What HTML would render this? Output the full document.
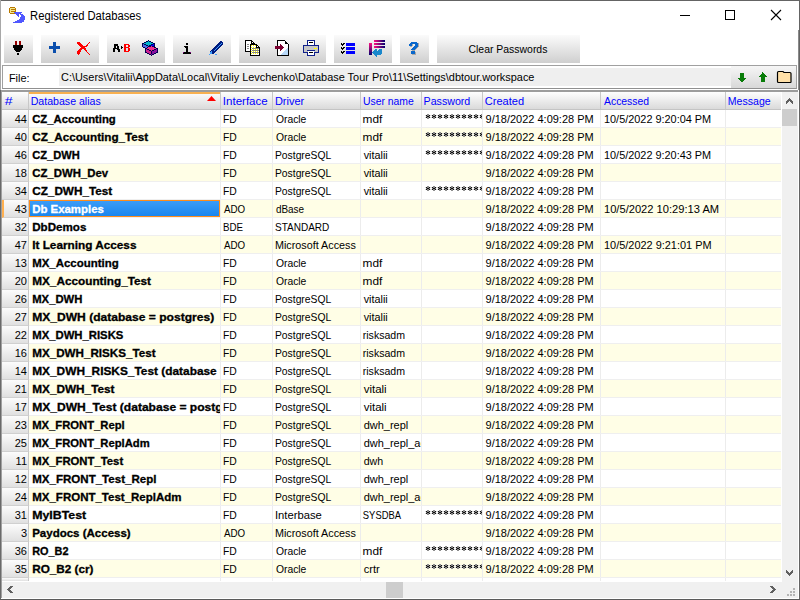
<!DOCTYPE html><html><head><meta charset="utf-8"><style>*{margin:0;padding:0;box-sizing:border-box}
html,body{width:800px;height:600px;overflow:hidden;background:#fff;font-family:"Liberation Sans",sans-serif;font-size:11px;color:#000;position:relative}
.abs{position:absolute}
#wl{position:absolute;left:0;top:0;width:1px;height:90px;background:#a8a8a8}
#wl2{position:absolute;left:0;top:90px;width:1px;height:510px;background:#6a6a6a}
#wl3{position:absolute;left:1px;top:92px;width:1px;height:506px;background:#a0a0a0}
#wt{position:absolute;left:0;top:0;width:800px;height:1px;background:#646464}
#wr{position:absolute;left:799px;top:0;width:1px;height:600px;background:#646464}
#wr2{position:absolute;left:798px;top:30px;width:1px;height:60px;background:#8a8a8a}
#wb{position:absolute;left:0;top:599px;width:800px;height:1px;background:#5a5a5a}

.tb{position:absolute;top:35px;height:28px;background:linear-gradient(#fbfbfb,#cfcfcf)}

#tbline{position:absolute;left:2px;top:65px;width:795px;height:1px;background:#a0a0a0}
#fp{position:absolute;left:2px;top:65px;width:795px;height:24px;border:1px solid #a0a0a0;border-bottom-color:#909090;background:#fff}

#fpedit{position:absolute;left:58px;top:67px;width:673px;height:20px;background:#efefef;border:1px solid #fff;border-right:none}

#fpbtn{position:absolute;left:731px;top:66px;width:65px;height:22px;background:linear-gradient(#f6f6f6,#d8d8d8)}

#line90{position:absolute;left:0px;top:90px;width:798px;height:2px;background:#9c9c9c}
#grid{position:absolute;left:0;top:0;width:800px;height:600px}
.hcell{position:absolute;background:linear-gradient(#fefefe,#dadada);border-right:1px solid #c8c8c8;color:#0000ff}
.hfix{position:absolute;background:linear-gradient(#fefefe,#dadada);border-right:1px solid #c8c8c8;color:#0000ff}
.ht{position:absolute;left:3px;top:3px;line-height:13px;white-space:nowrap}
.sortbar{position:absolute;left:0;top:0;width:100%;height:2px;background:#f8b050}
.rowbg{position:absolute;left:29px;width:752px;height:17px}
.fix{position:absolute;left:2px;width:27px;height:18px;background:linear-gradient(#fcfcfc,#e0e0e0);border-right:1px solid #c8c8c8;border-bottom:1px solid #d0d0d0}
.fix span{position:absolute;right:1px;top:3px;line-height:13px}
.fix.sel{border-left:2px solid #ffb050}
.c{position:absolute;height:17px;line-height:13px;padding:3px 0 0 3px;white-space:nowrap;overflow:hidden}
.b{font-weight:bold}
.selcell{position:absolute;left:29px;width:191px;height:17px;border:1px solid #ff8c1a;background:linear-gradient(#3c9cf6,#1a86ee);color:#fff;font-weight:bold}
.selcell span{position:absolute;left:2px;top:3px;line-height:13px;white-space:nowrap}
.vsep{position:absolute;top:110px;width:1px;height:471px;background:#ececec}
.hsep{position:absolute;left:29px;width:752px;height:1px;background:#efefef}
#vsb{position:absolute;left:782px;top:92px;width:16px;height:490px;background:#f0f0f0}
#vthumb{position:absolute;left:782px;top:109px;width:15px;height:17px;background:#cdcdcd}
#hsb{position:absolute;left:2px;top:582px;width:780px;height:16px;background:#f0f0f0}
#hthumb{position:absolute;left:386px;top:582px;width:17px;height:16px;background:#cdcdcd}
#corner{position:absolute;left:782px;top:582px;width:16px;height:16px;background:#f0f0f0}
.tc{position:absolute;white-space:nowrap}
.tc span{position:absolute;line-height:13px;white-space:nowrap;transform-origin:0 0}
.hc{color:#0000ff}
.ttl{font-size:12px}
.ttl span{line-height:16px}
.selt{color:#fff}
.pw span{left:3px;top:3px;font-size:13px;letter-spacing:1.75px}
#hline{position:absolute;left:2px;top:109px;width:779px;height:1px;background:#c4c4c4}
.b span{-webkit-text-stroke:0.3px currentColor}
</style></head><body>
<svg class="abs" style="left:0;top:0" width="800" height="100" shape-rendering="crispEdges"><rect x="10" y="7" width="5" height="1" fill="#b87800"/><rect x="9" y="8" width="1" height="1" fill="#b87800"/><rect x="10" y="8" width="5" height="1" fill="#f0e890"/><rect x="15" y="8" width="1" height="1" fill="#b87800"/><rect x="9" y="9" width="1" height="1" fill="#b87800"/><rect x="10" y="9" width="1" height="1" fill="#f0e890"/><rect x="11" y="9" width="5" height="1" fill="#b87800"/><rect x="9" y="10" width="1" height="1" fill="#b87800"/><rect x="10" y="10" width="5" height="1" fill="#f0e890"/><rect x="15" y="10" width="1" height="1" fill="#b87800"/><rect x="9" y="11" width="1" height="1" fill="#b87800"/><rect x="10" y="11" width="1" height="1" fill="#f0e890"/><rect x="11" y="11" width="5" height="1" fill="#b87800"/><rect x="9" y="12" width="1" height="1" fill="#b87800"/><rect x="10" y="12" width="5" height="1" fill="#f0e890"/><rect x="15" y="12" width="1" height="1" fill="#b87800"/><rect x="10" y="13" width="5" height="1" fill="#b87800"/><rect x="14" y="12" width="8" height="1" fill="#5058ff"/><rect x="15" y="13" width="6" height="1" fill="#5058ff"/><rect x="16" y="14" width="3" height="1" fill="#5058ff"/><rect x="20" y="14" width="3" height="1" fill="#5058ff"/><rect x="17" y="15" width="2" height="1" fill="#5058ff"/><rect x="21" y="15" width="3" height="1" fill="#5058ff"/><rect x="18" y="16" width="1" height="1" fill="#5058ff"/><rect x="21" y="16" width="4" height="1" fill="#5058ff"/><rect x="20" y="17" width="5" height="1" fill="#5058ff"/><rect x="20" y="18" width="5" height="1" fill="#5058ff"/><rect x="19" y="19" width="6" height="1" fill="#5058ff"/><rect x="17" y="20" width="7" height="1" fill="#5058ff"/><rect x="15" y="21" width="9" height="1" fill="#5058ff"/><rect x="13" y="22" width="9" height="1" fill="#5058ff"/></svg>

<svg class="abs" style="left:0;top:0" width="800" height="30">
 <rect x="680" y="15" width="10" height="1" fill="#000"/>
 <rect x="725.5" y="10.5" width="9" height="9" fill="none" stroke="#000" stroke-width="1"/>
 <path d="M771 10 L781 20 M781 10 L771 20" stroke="#000" stroke-width="1.1"/>
</svg>
<div class="tb" style="left:4px;width:29px"></div>
<div class="tb" style="left:41px;width:58px"></div>
<div class="tb" style="left:107px;width:58px"></div>
<div class="tb" style="left:173px;width:58px"></div>
<div class="tb" style="left:239px;width:87px"></div>
<div class="tb" style="left:334px;width:58px"></div>
<div class="tb" style="left:400px;width:29px"></div>
<div class="tb" style="left:437px;width:143px"></div>
<svg class="abs" style="left:0;top:0" width="800" height="64" shape-rendering="crispEdges">
 <!-- plus -->
 <rect x="53" y="42" width="3" height="11" fill="#0b4fad"/><rect x="49" y="46" width="11" height="3" fill="#0b4fad"/>
</svg>
<svg class="abs" style="left:0;top:0" width="800" height="100" shape-rendering="crispEdges"><rect x="77" y="42" width="3" height="1" fill="#ff0000"/><rect x="89" y="42" width="1" height="1" fill="#ff0000"/><rect x="77" y="43" width="4" height="1" fill="#ff0000"/><rect x="88" y="43" width="1" height="1" fill="#ff0000"/><rect x="78" y="44" width="4" height="1" fill="#ff0000"/><rect x="87" y="44" width="1" height="1" fill="#ff0000"/><rect x="79" y="45" width="4" height="1" fill="#ff0000"/><rect x="86" y="45" width="2" height="1" fill="#ff0000"/><rect x="80" y="46" width="7" height="1" fill="#ff0000"/><rect x="81" y="47" width="4" height="1" fill="#ff0000"/><rect x="80" y="48" width="6" height="1" fill="#ff0000"/><rect x="79" y="49" width="3" height="1" fill="#ff0000"/><rect x="84" y="49" width="2" height="1" fill="#ff0000"/><rect x="78" y="50" width="3" height="1" fill="#ff0000"/><rect x="85" y="50" width="2" height="1" fill="#ff0000"/><rect x="77" y="51" width="4" height="1" fill="#ff0000"/><rect x="86" y="51" width="1" height="1" fill="#ff0000"/><rect x="77" y="52" width="3" height="1" fill="#ff0000"/><rect x="87" y="52" width="1" height="1" fill="#ff0000"/><rect x="77" y="53" width="3" height="1" fill="#ff0000"/><rect x="88" y="53" width="1" height="1" fill="#ff0000"/><rect x="78" y="54" width="1" height="1" fill="#ff0000"/><rect x="89" y="54" width="1" height="1" fill="#ff0000"/></svg><svg class="abs" style="left:0;top:0" width="800" height="64" shape-rendering="crispEdges">
</svg>
<svg class="abs" style="left:0;top:0" width="800" height="100" shape-rendering="crispEdges"><rect x="220" y="41" width="2" height="1" fill="#001c80"/><rect x="219" y="42" width="4" height="1" fill="#001c80"/><rect x="218" y="43" width="3" height="1" fill="#001c80"/><rect x="221" y="43" width="1" height="1" fill="#40a0ff"/><rect x="222" y="43" width="1" height="1" fill="#001c80"/><rect x="217" y="44" width="3" height="1" fill="#001c80"/><rect x="220" y="44" width="1" height="1" fill="#40a0ff"/><rect x="221" y="44" width="2" height="1" fill="#001c80"/><rect x="216" y="45" width="3" height="1" fill="#001c80"/><rect x="219" y="45" width="1" height="1" fill="#40a0ff"/><rect x="220" y="45" width="2" height="1" fill="#001c80"/><rect x="215" y="46" width="3" height="1" fill="#001c80"/><rect x="218" y="46" width="1" height="1" fill="#40a0ff"/><rect x="219" y="46" width="2" height="1" fill="#001c80"/><rect x="214" y="47" width="3" height="1" fill="#001c80"/><rect x="217" y="47" width="1" height="1" fill="#40a0ff"/><rect x="218" y="47" width="2" height="1" fill="#001c80"/><rect x="213" y="48" width="3" height="1" fill="#001c80"/><rect x="216" y="48" width="1" height="1" fill="#40a0ff"/><rect x="217" y="48" width="2" height="1" fill="#001c80"/><rect x="212" y="49" width="3" height="1" fill="#001c80"/><rect x="215" y="49" width="1" height="1" fill="#40a0ff"/><rect x="216" y="49" width="2" height="1" fill="#001c80"/><rect x="211" y="50" width="3" height="1" fill="#001c80"/><rect x="214" y="50" width="1" height="1" fill="#40a0ff"/><rect x="215" y="50" width="2" height="1" fill="#001c80"/><rect x="210" y="51" width="1" height="1" fill="#001c80"/><rect x="211" y="51" width="1" height="1" fill="#40a0ff"/><rect x="212" y="51" width="4" height="1" fill="#001c80"/><rect x="210" y="52" width="2" height="1" fill="#40a0ff"/><rect x="212" y="52" width="3" height="1" fill="#001c80"/><rect x="210" y="53" width="2" height="1" fill="#40a0ff"/><rect x="212" y="53" width="2" height="1" fill="#001c80"/><rect x="209" y="54" width="1" height="1" fill="#40a0ff"/><rect x="215" y="54" width="2" height="1" fill="#40a0ff"/></svg><svg class="abs" style="left:0;top:0" width="800" height="64" shape-rendering="crispEdges">
 <!-- import -->
 <path d="M277 40H285V41H286V42H287V43H288V44H289V56H277Z" fill="#000"/>
 <path d="M278 41H285V44H288V55H278Z" fill="#fff"/>
 <path d="M288 47 L288 55 L280 55Z" fill="#b8d8f8"/>
 <path d="M275 46H280V44H281V45H282V46H283V47H284V48H283V49H282V50H281V51H280V49H275Z" fill="#7a0030"/>
 <!-- printer -->
 <path d="M307 40H315V45H319V53H315V56H307V53H303V45H307Z" fill="#10208a"/>
 <rect x="308" y="41" width="6" height="4" fill="#fff"/>
 <rect x="304" y="46" width="14" height="6" fill="#c8c8c8"/>
 <rect x="314" y="48" width="3" height="1" fill="#ffff00"/>
 <rect x="308" y="51" width="6" height="4" fill="#fff"/>
 <rect x="307" y="50" width="8" height="1" fill="#10208a"/>
 <rect x="309" y="42" width="4" height="1" fill="#000"/><rect x="309" y="52" width="4" height="1" fill="#000"/>
 <!-- check list -->
 <path d="M341 43H342V44H343V43H345V44H344V45H343V46H342V45H341Z" fill="#000"/>
 <path d="M341 47H342V48H343V47H345V48H344V49H343V50H342V49H341Z" fill="#000"/>
 <path d="M341 51H342V52H343V51H345V52H344V53H343V54H342V53H341Z" fill="#000"/>
 <rect x="346" y="43" width="9" height="3" fill="#0000ff"/><rect x="346" y="47" width="9" height="3" fill="#0000ff"/><rect x="346" y="51" width="9" height="3" fill="#0000ff"/>
</svg>
<svg class="abs" style="left:0;top:0" width="800" height="64">
 <defs><linearGradient id="pg" x1="0" y1="0" x2="1" y2="0"><stop offset="0" stop-color="#ff1080"/><stop offset="1" stop-color="#000070"/></linearGradient>
 <linearGradient id="pgv" x1="0" y1="0" x2="0" y2="1"><stop offset="0" stop-color="#ff1080"/><stop offset="1" stop-color="#000070"/></linearGradient></defs>
 <rect x="369" y="43" width="3" height="12" fill="url(#pgv)"/>
 <rect x="374" y="40" width="11" height="2" fill="url(#pg)"/>
 <rect x="374" y="43" width="11" height="2" fill="url(#pg)"/>
 <rect x="374" y="46" width="11" height="2" fill="url(#pg)"/>
 <rect x="411" y="51" width="3.5" height="3" fill="#0a66cc"/>
</svg>
<svg class="abs" style="left:0;top:0" width="800" height="100" shape-rendering="crispEdges"><rect x="114" y="44" width="4" height="1" fill="#000000"/><rect x="124" y="44" width="5" height="1" fill="#ff0000"/><rect x="114" y="45" width="4" height="1" fill="#000000"/><rect x="124" y="45" width="2" height="1" fill="#ff0000"/><rect x="128" y="45" width="2" height="1" fill="#ff0000"/><rect x="114" y="46" width="2" height="1" fill="#000000"/><rect x="117" y="46" width="2" height="1" fill="#000000"/><rect x="121" y="46" width="1" height="1" fill="#000000"/><rect x="124" y="46" width="2" height="1" fill="#ff0000"/><rect x="128" y="46" width="2" height="1" fill="#ff0000"/><rect x="114" y="47" width="2" height="1" fill="#000000"/><rect x="117" y="47" width="2" height="1" fill="#000000"/><rect x="121" y="47" width="2" height="1" fill="#000000"/><rect x="124" y="47" width="5" height="1" fill="#ff0000"/><rect x="113" y="48" width="6" height="1" fill="#000000"/><rect x="121" y="48" width="1" height="1" fill="#000000"/><rect x="124" y="48" width="2" height="1" fill="#ff0000"/><rect x="128" y="48" width="2" height="1" fill="#ff0000"/><rect x="113" y="49" width="2" height="1" fill="#000000"/><rect x="117" y="49" width="3" height="1" fill="#000000"/><rect x="124" y="49" width="2" height="1" fill="#ff0000"/><rect x="128" y="49" width="2" height="1" fill="#ff0000"/><rect x="113" y="50" width="2" height="1" fill="#000000"/><rect x="118" y="50" width="2" height="1" fill="#000000"/><rect x="124" y="50" width="2" height="1" fill="#ff0000"/><rect x="128" y="50" width="2" height="1" fill="#ff0000"/><rect x="113" y="51" width="2" height="1" fill="#000000"/><rect x="118" y="51" width="2" height="1" fill="#000000"/><rect x="124" y="51" width="5" height="1" fill="#ff0000"/></svg><svg class="abs" style="left:0;top:0" width="800" height="100" shape-rendering="crispEdges"><rect x="245" y="40" width="7" height="1" fill="#000000"/><rect x="245" y="41" width="1" height="1" fill="#000000"/><rect x="246" y="41" width="5" height="1" fill="#ffffff"/><rect x="251" y="41" width="2" height="1" fill="#000000"/><rect x="245" y="42" width="1" height="1" fill="#000000"/><rect x="246" y="42" width="5" height="1" fill="#ffffff"/><rect x="251" y="42" width="1" height="1" fill="#000000"/><rect x="252" y="42" width="1" height="1" fill="#ffffff"/><rect x="253" y="42" width="1" height="1" fill="#000000"/><rect x="245" y="43" width="1" height="1" fill="#000000"/><rect x="246" y="43" width="5" height="1" fill="#ffffff"/><rect x="251" y="43" width="4" height="1" fill="#000000"/><rect x="245" y="44" width="1" height="1" fill="#000000"/><rect x="246" y="44" width="1" height="1" fill="#ffffff"/><rect x="247" y="44" width="2" height="1" fill="#8a8a8a"/><rect x="249" y="44" width="1" height="1" fill="#ffffff"/><rect x="250" y="44" width="7" height="1" fill="#000000"/><rect x="245" y="45" width="1" height="1" fill="#000000"/><rect x="246" y="45" width="4" height="1" fill="#ffffff"/><rect x="250" y="45" width="1" height="1" fill="#000000"/><rect x="251" y="45" width="1" height="1" fill="#f0f000"/><rect x="252" y="45" width="1" height="1" fill="#ffffff"/><rect x="253" y="45" width="1" height="1" fill="#f0f000"/><rect x="254" y="45" width="1" height="1" fill="#ffffff"/><rect x="255" y="45" width="1" height="1" fill="#f0f000"/><rect x="256" y="45" width="2" height="1" fill="#000000"/><rect x="245" y="46" width="1" height="1" fill="#000000"/><rect x="246" y="46" width="1" height="1" fill="#ffffff"/><rect x="247" y="46" width="2" height="1" fill="#8a8a8a"/><rect x="249" y="46" width="1" height="1" fill="#ffffff"/><rect x="250" y="46" width="1" height="1" fill="#000000"/><rect x="251" y="46" width="5" height="1" fill="#ffffff"/><rect x="256" y="46" width="1" height="1" fill="#000000"/><rect x="257" y="46" width="1" height="1" fill="#ffffff"/><rect x="258" y="46" width="1" height="1" fill="#000000"/><rect x="245" y="47" width="1" height="1" fill="#000000"/><rect x="246" y="47" width="4" height="1" fill="#ffffff"/><rect x="250" y="47" width="1" height="1" fill="#000000"/><rect x="251" y="47" width="1" height="1" fill="#f0f000"/><rect x="252" y="47" width="1" height="1" fill="#ffffff"/><rect x="253" y="47" width="1" height="1" fill="#f0f000"/><rect x="254" y="47" width="1" height="1" fill="#ffffff"/><rect x="255" y="47" width="1" height="1" fill="#f0f000"/><rect x="256" y="47" width="4" height="1" fill="#000000"/><rect x="245" y="48" width="1" height="1" fill="#000000"/><rect x="246" y="48" width="1" height="1" fill="#ffffff"/><rect x="247" y="48" width="2" height="1" fill="#8a8a8a"/><rect x="249" y="48" width="1" height="1" fill="#ffffff"/><rect x="250" y="48" width="1" height="1" fill="#000000"/><rect x="251" y="48" width="1" height="1" fill="#ffffff"/><rect x="252" y="48" width="7" height="1" fill="#8a8a8a"/><rect x="259" y="48" width="1" height="1" fill="#000000"/><rect x="245" y="49" width="1" height="1" fill="#000000"/><rect x="246" y="49" width="4" height="1" fill="#ffffff"/><rect x="250" y="49" width="1" height="1" fill="#000000"/><rect x="251" y="49" width="1" height="1" fill="#f0f000"/><rect x="252" y="49" width="1" height="1" fill="#ffffff"/><rect x="253" y="49" width="1" height="1" fill="#f0f000"/><rect x="254" y="49" width="1" height="1" fill="#ffffff"/><rect x="255" y="49" width="1" height="1" fill="#f0f000"/><rect x="256" y="49" width="1" height="1" fill="#ffffff"/><rect x="257" y="49" width="1" height="1" fill="#f0f000"/><rect x="258" y="49" width="1" height="1" fill="#ffffff"/><rect x="259" y="49" width="1" height="1" fill="#000000"/><rect x="245" y="50" width="1" height="1" fill="#000000"/><rect x="246" y="50" width="4" height="1" fill="#ffffff"/><rect x="250" y="50" width="1" height="1" fill="#000000"/><rect x="251" y="50" width="1" height="1" fill="#ffffff"/><rect x="252" y="50" width="7" height="1" fill="#8a8a8a"/><rect x="259" y="50" width="1" height="1" fill="#000000"/><rect x="245" y="51" width="6" height="1" fill="#000000"/><rect x="251" y="51" width="1" height="1" fill="#f0f000"/><rect x="252" y="51" width="1" height="1" fill="#ffffff"/><rect x="253" y="51" width="1" height="1" fill="#f0f000"/><rect x="254" y="51" width="1" height="1" fill="#ffffff"/><rect x="255" y="51" width="1" height="1" fill="#f0f000"/><rect x="256" y="51" width="1" height="1" fill="#ffffff"/><rect x="257" y="51" width="1" height="1" fill="#f0f000"/><rect x="258" y="51" width="1" height="1" fill="#ffffff"/><rect x="259" y="51" width="1" height="1" fill="#000000"/><rect x="250" y="52" width="1" height="1" fill="#000000"/><rect x="251" y="52" width="1" height="1" fill="#ffffff"/><rect x="252" y="52" width="7" height="1" fill="#8a8a8a"/><rect x="259" y="52" width="1" height="1" fill="#000000"/><rect x="250" y="53" width="1" height="1" fill="#000000"/><rect x="251" y="53" width="1" height="1" fill="#f0f000"/><rect x="252" y="53" width="1" height="1" fill="#ffffff"/><rect x="253" y="53" width="1" height="1" fill="#f0f000"/><rect x="254" y="53" width="1" height="1" fill="#ffffff"/><rect x="255" y="53" width="1" height="1" fill="#f0f000"/><rect x="256" y="53" width="1" height="1" fill="#ffffff"/><rect x="257" y="53" width="1" height="1" fill="#f0f000"/><rect x="258" y="53" width="1" height="1" fill="#ffffff"/><rect x="259" y="53" width="1" height="1" fill="#000000"/><rect x="250" y="54" width="1" height="1" fill="#000000"/><rect x="251" y="54" width="8" height="1" fill="#ffffff"/><rect x="259" y="54" width="1" height="1" fill="#000000"/><rect x="250" y="55" width="10" height="1" fill="#000000"/></svg><svg class="abs" style="left:0;top:0" width="800" height="100" shape-rendering="crispEdges"><rect x="375" y="49" width="2" height="1" fill="#1a88cc"/><rect x="379" y="49" width="3" height="1" fill="#1a88cc"/><rect x="374" y="50" width="3" height="1" fill="#1a88cc"/><rect x="378" y="50" width="4" height="1" fill="#1a88cc"/><rect x="373" y="51" width="9" height="1" fill="#1a88cc"/><rect x="372" y="52" width="10" height="1" fill="#1a88cc"/><rect x="373" y="53" width="9" height="1" fill="#1a88cc"/><rect x="374" y="54" width="7" height="1" fill="#1a88cc"/><rect x="375" y="55" width="2" height="1" fill="#1a88cc"/><rect x="376" y="56" width="1" height="1" fill="#1a88cc"/></svg><svg class="abs" style="left:0;top:0" width="800" height="100" shape-rendering="crispEdges"><rect x="148" y="40" width="1" height="1" fill="#000050"/><rect x="146" y="41" width="2" height="1" fill="#000050"/><rect x="148" y="41" width="1" height="1" fill="#00b4cc"/><rect x="149" y="41" width="2" height="1" fill="#000050"/><rect x="144" y="42" width="2" height="1" fill="#000050"/><rect x="146" y="42" width="5" height="1" fill="#00b4cc"/><rect x="151" y="42" width="2" height="1" fill="#000050"/><rect x="142" y="43" width="2" height="1" fill="#000050"/><rect x="144" y="43" width="9" height="1" fill="#00b4cc"/><rect x="153" y="43" width="2" height="1" fill="#000050"/><rect x="142" y="44" width="1" height="1" fill="#000050"/><rect x="143" y="44" width="1" height="1" fill="#4a6ae6"/><rect x="144" y="44" width="2" height="1" fill="#000050"/><rect x="146" y="44" width="5" height="1" fill="#00b4cc"/><rect x="151" y="44" width="2" height="1" fill="#000050"/><rect x="153" y="44" width="1" height="1" fill="#0000ff"/><rect x="154" y="44" width="1" height="1" fill="#000050"/><rect x="142" y="45" width="1" height="1" fill="#000050"/><rect x="143" y="45" width="3" height="1" fill="#4a6ae6"/><rect x="146" y="45" width="2" height="1" fill="#000050"/><rect x="148" y="45" width="1" height="1" fill="#00b4cc"/><rect x="149" y="45" width="2" height="1" fill="#000050"/><rect x="151" y="45" width="3" height="1" fill="#0000ff"/><rect x="154" y="45" width="1" height="1" fill="#000050"/><rect x="142" y="46" width="1" height="1" fill="#000050"/><rect x="143" y="46" width="5" height="1" fill="#4a6ae6"/><rect x="148" y="46" width="3" height="1" fill="#000050"/><rect x="151" y="46" width="1" height="1" fill="#f02c8c"/><rect x="152" y="46" width="3" height="1" fill="#000050"/><rect x="143" y="47" width="2" height="1" fill="#000050"/><rect x="145" y="47" width="2" height="1" fill="#4a6ae6"/><rect x="147" y="47" width="1" height="1" fill="#000050"/><rect x="148" y="47" width="6" height="1" fill="#f02c8c"/><rect x="154" y="47" width="2" height="1" fill="#000050"/><rect x="145" y="48" width="2" height="1" fill="#000050"/><rect x="147" y="48" width="9" height="1" fill="#f02c8c"/><rect x="156" y="48" width="2" height="1" fill="#000050"/><rect x="145" y="49" width="1" height="1" fill="#000050"/><rect x="146" y="49" width="1" height="1" fill="#cc2090"/><rect x="147" y="49" width="2" height="1" fill="#000050"/><rect x="149" y="49" width="5" height="1" fill="#f02c8c"/><rect x="154" y="49" width="2" height="1" fill="#000050"/><rect x="156" y="49" width="1" height="1" fill="#8a10a0"/><rect x="157" y="49" width="1" height="1" fill="#000050"/><rect x="145" y="50" width="1" height="1" fill="#000050"/><rect x="146" y="50" width="3" height="1" fill="#cc2090"/><rect x="149" y="50" width="2" height="1" fill="#000050"/><rect x="151" y="50" width="1" height="1" fill="#f02c8c"/><rect x="152" y="50" width="2" height="1" fill="#000050"/><rect x="154" y="50" width="3" height="1" fill="#8a10a0"/><rect x="157" y="50" width="1" height="1" fill="#000050"/><rect x="145" y="51" width="1" height="1" fill="#000050"/><rect x="146" y="51" width="5" height="1" fill="#cc2090"/><rect x="151" y="51" width="1" height="1" fill="#000050"/><rect x="152" y="51" width="5" height="1" fill="#8a10a0"/><rect x="157" y="51" width="1" height="1" fill="#000050"/><rect x="145" y="52" width="2" height="1" fill="#000050"/><rect x="147" y="52" width="4" height="1" fill="#cc2090"/><rect x="151" y="52" width="1" height="1" fill="#000050"/><rect x="152" y="52" width="4" height="1" fill="#8a10a0"/><rect x="156" y="52" width="2" height="1" fill="#000050"/><rect x="147" y="53" width="2" height="1" fill="#000050"/><rect x="149" y="53" width="2" height="1" fill="#cc2090"/><rect x="151" y="53" width="1" height="1" fill="#000050"/><rect x="152" y="53" width="2" height="1" fill="#8a10a0"/><rect x="154" y="53" width="2" height="1" fill="#000050"/><rect x="149" y="54" width="2" height="1" fill="#000050"/><rect x="151" y="54" width="1" height="1" fill="#8a10a0"/><rect x="152" y="54" width="2" height="1" fill="#000050"/><rect x="151" y="55" width="1" height="1" fill="#000050"/></svg><svg class="abs" style="left:0;top:0" width="800" height="100" shape-rendering="crispEdges"><rect x="15" y="41" width="2" height="1" fill="#980000"/><rect x="19" y="41" width="2" height="1" fill="#980000"/><rect x="15" y="42" width="2" height="1" fill="#980000"/><rect x="19" y="42" width="2" height="1" fill="#980000"/><rect x="15" y="43" width="2" height="1" fill="#980000"/><rect x="19" y="43" width="2" height="1" fill="#980000"/><rect x="15" y="44" width="2" height="1" fill="#980000"/><rect x="19" y="44" width="2" height="1" fill="#980000"/><rect x="13" y="45" width="10" height="1" fill="#000000"/><rect x="13" y="46" width="10" height="1" fill="#000000"/><rect x="13" y="47" width="10" height="1" fill="#000000"/><rect x="14" y="48" width="8" height="1" fill="#000000"/><rect x="14" y="49" width="8" height="1" fill="#000000"/><rect x="15" y="50" width="6" height="1" fill="#000000"/><rect x="16" y="51" width="4" height="1" fill="#000000"/><rect x="17" y="53" width="2" height="1" fill="#000000"/><rect x="17" y="54" width="2" height="1" fill="#000000"/></svg><svg class="abs" style="left:0;top:0" width="800" height="100" shape-rendering="crispEdges"><rect x="186" y="43" width="2" height="1" fill="#000000"/><rect x="186" y="44" width="2" height="1" fill="#000000"/><rect x="184" y="46" width="4" height="1" fill="#000000"/><rect x="185" y="47" width="3" height="1" fill="#000000"/><rect x="186" y="48" width="2" height="1" fill="#000000"/><rect x="186" y="49" width="2" height="1" fill="#000000"/><rect x="186" y="50" width="2" height="1" fill="#000000"/><rect x="186" y="51" width="2" height="1" fill="#000000"/><rect x="183" y="52" width="1" height="1" fill="#800080"/><rect x="184" y="52" width="6" height="1" fill="#000000"/><rect x="190" y="52" width="1" height="1" fill="#800080"/><rect x="183" y="53" width="8" height="1" fill="#000000"/></svg><svg class="abs" style="left:0;top:0" width="800" height="100" shape-rendering="crispEdges"><rect x="411" y="42" width="6" height="1" fill="#0a68cc"/><rect x="410" y="43" width="8" height="1" fill="#0a68cc"/><rect x="418" y="43" width="1" height="1" fill="#a8a8a8"/><rect x="409" y="44" width="3" height="1" fill="#0a68cc"/><rect x="412" y="44" width="1" height="1" fill="#a8a8a8"/><rect x="415" y="44" width="3" height="1" fill="#0a68cc"/><rect x="418" y="44" width="1" height="1" fill="#a8a8a8"/><rect x="409" y="45" width="3" height="1" fill="#0a68cc"/><rect x="412" y="45" width="1" height="1" fill="#a8a8a8"/><rect x="415" y="45" width="3" height="1" fill="#0a68cc"/><rect x="418" y="45" width="1" height="1" fill="#a8a8a8"/><rect x="410" y="46" width="2" height="1" fill="#a8a8a8"/><rect x="414" y="46" width="4" height="1" fill="#0a68cc"/><rect x="418" y="46" width="1" height="1" fill="#a8a8a8"/><rect x="413" y="47" width="4" height="1" fill="#0a68cc"/><rect x="417" y="47" width="1" height="1" fill="#a8a8a8"/><rect x="412" y="48" width="4" height="1" fill="#0a68cc"/><rect x="416" y="48" width="1" height="1" fill="#a8a8a8"/><rect x="411" y="49" width="4" height="1" fill="#0a68cc"/><rect x="415" y="49" width="1" height="1" fill="#a8a8a8"/><rect x="412" y="50" width="3" height="1" fill="#a8a8a8"/><rect x="411" y="51" width="4" height="1" fill="#0a68cc"/><rect x="411" y="52" width="4" height="1" fill="#0a68cc"/><rect x="415" y="52" width="1" height="1" fill="#a8a8a8"/><rect x="411" y="53" width="4" height="1" fill="#0a68cc"/><rect x="415" y="53" width="1" height="1" fill="#a8a8a8"/><rect x="412" y="54" width="4" height="1" fill="#a8a8a8"/></svg><div id="fp"></div>

<div id="fpedit"></div>

<div id="fpbtn"></div>
<svg class="abs" style="left:0;top:0" width="800" height="90" shape-rendering="crispEdges">
 <path d="M740 73H744V78H746V79H745V80H744V81H743V82H741V81H740V80H739V79H738V78H740Z" fill="#087c08"/>
 <path d="M762 72H763V73H764V74H765V75H766V76H767V77H765V82H761V77H759V76H760V75H761V74H762Z" fill="#087c08"/>
</svg>
<svg class="abs" style="left:0;top:0" width="800" height="90">
 <path d="M777.5 72.5 Q777.5 71.5 778.5 71.5 L783 71.5 L784 72.5 L790 72.5 Q791 72.5 791 73.5 L791 82 Q791 82.5 790.5 82.5 L778.5 82.5 Q777.5 82.5 777.5 81.5Z" fill="#ffe0a8" stroke="#000" stroke-width="1.2"/>
</svg>
<div id="line90"></div>
<div class="tc ttl" style="left:28px;top:5px;width:140px;height:18px;overflow:hidden;"><span style="left:3px;top:3px;transform:translateX(-0.94px) scaleX(0.9359);">Registered Databases</span></div><div class="tc " style="left:437px;top:35px;width:143px;height:28px;overflow:hidden;"><span style="left:31px;top:8px;transform:translateX(0.50px) scaleX(0.9488);">Clear Passwords</span></div><div class="tc " style="left:4px;top:68px;width:50px;height:18px;overflow:hidden;"><span style="left:6px;top:4px;transform:translateX(-1.09px) scaleX(0.9921);">File:</span></div><div class="tc " style="left:58px;top:68px;width:673px;height:18px;overflow:hidden;"><span style="left:3px;top:3px;transform:translateX(0.00px) scaleX(0.9931);">C:\Users\Vitalii\AppData\Local\Vitaliy Levchenko\Database Tour Pro\11\Settings\dbtour.workspace</span></div><svg width="0" height="0" style="position:absolute"><defs><pattern id="ast" x="3" y="4" width="6" height="5" patternUnits="userSpaceOnUse"><rect x="2" y="0" width="2" height="1" fill="#8c8c8c"/><rect x="0" y="1" width="1" height="1" fill="#d8d8d8"/><rect x="1" y="1" width="1" height="1" fill="#101010"/><rect x="2" y="1" width="2" height="1" fill="#8c8c8c"/><rect x="4" y="1" width="1" height="1" fill="#101010"/><rect x="5" y="1" width="1" height="1" fill="#d8d8d8"/><rect x="1" y="2" width="1" height="1" fill="#8c8c8c"/><rect x="2" y="2" width="2" height="1" fill="#101010"/><rect x="4" y="2" width="1" height="1" fill="#8c8c8c"/><rect x="0" y="3" width="1" height="1" fill="#d8d8d8"/><rect x="1" y="3" width="1" height="1" fill="#101010"/><rect x="2" y="3" width="2" height="1" fill="#8c8c8c"/><rect x="4" y="3" width="1" height="1" fill="#101010"/><rect x="5" y="3" width="1" height="1" fill="#d8d8d8"/><rect x="2" y="4" width="2" height="1" fill="#8c8c8c"/></pattern></defs></svg><div id="grid"><div class="hfix" style="left:2px;top:92px;width:27px;height:17px"></div><div class="tc hc" style="left:2px;top:92px;width:26px;height:17px;overflow:hidden;"><span style="left:4px;top:3px;transform:translateX(-1.28px) scaleX(1.2800);">#</span></div><div class="hcell" style="left:29px;top:92px;width:192px;height:17px;"><div class="sortbar"></div><svg width="10" height="6" style="position:absolute;left:178px;top:4px"><path d="M4.5 0 L9 5 L0 5Z" fill="#f00"/></svg></div><div class="tc hc" style="left:29px;top:92px;width:191px;height:17px;overflow:hidden;"><span style="left:3px;top:3px;transform:translateX(-1.36px) scaleX(0.9639);">Database alias</span></div><div class="hcell" style="left:221px;top:92px;width:52px;height:17px;"></div><div class="tc hc" style="left:221px;top:92px;width:51px;height:17px;overflow:hidden;"><span style="left:3px;top:3px;transform:translateX(-1.15px) scaleX(1.0476);">Interface</span></div><div class="hcell" style="left:273px;top:92px;width:88px;height:17px;"></div><div class="tc hc" style="left:273px;top:92px;width:87px;height:17px;overflow:hidden;"><span style="left:3px;top:3px;transform:translateX(-1.10px) scaleX(1.0000);">Driver</span></div><div class="hcell" style="left:361px;top:92px;width:61px;height:17px;"></div><div class="tc hc" style="left:361px;top:92px;width:60px;height:17px;overflow:hidden;"><span style="left:3px;top:3px;transform:translateX(-1.05px) scaleX(0.9453);">User name</span></div><div class="hcell" style="left:422px;top:92px;width:61px;height:17px;"></div><div class="tc hc" style="left:422px;top:92px;width:60px;height:17px;overflow:hidden;"><span style="left:3px;top:3px;transform:translateX(-1.47px) scaleX(0.9681);">Password</span></div><div class="hcell" style="left:483px;top:92px;width:118px;height:17px;"></div><div class="tc hc" style="left:483px;top:92px;width:117px;height:17px;overflow:hidden;"><span style="left:3px;top:3px;transform:translateX(-1.21px) scaleX(1.0053);">Created</span></div><div class="hcell" style="left:601px;top:92px;width:125px;height:17px;"></div><div class="tc hc" style="left:601px;top:92px;width:124px;height:17px;overflow:hidden;"><span style="left:3px;top:3px;transform:translateX(0.00px) scaleX(0.9447);">Accessed</span></div><div class="hcell" style="left:726px;top:92px;width:55px;height:17px;border-right:none"></div><div class="tc hc" style="left:726px;top:92px;width:55px;height:17px;overflow:hidden;"><span style="left:3px;top:3px;transform:translateX(-1.16px) scaleX(0.9581);">Message</span></div><div class="rowbg" style="top:110px;background:#ffffff"></div><div class="fix" style="top:110px"><span>44</span></div><div class="tc b" style="left:29px;top:110px;width:191px;height:17px;overflow:hidden;"><span style="left:3px;top:3px;transform:translateX(0.20px) scaleX(1.0284);">CZ_Accounting</span></div><div class="tc " style="left:221px;top:110px;width:51px;height:17px;overflow:hidden;"><span style="left:3px;top:3px;transform:translateX(-1.04px) scaleX(0.9385);">FD</span></div><div class="tc " style="left:273px;top:110px;width:87px;height:17px;overflow:hidden;"><span style="left:3px;top:3px;transform:translateX(-0.10px) scaleX(0.9406);">Oracle</span></div><div class="tc " style="left:361px;top:110px;width:60px;height:17px;overflow:hidden;"><span style="left:3px;top:3px;transform:translateX(-1.38px) scaleX(1.0765);">mdf</span></div><svg class="abs" style="left:422px;top:110px" width="60" height="17"><rect x="3" y="4" width="57" height="5" fill="url(#ast)"/></svg><div class="tc " style="left:483px;top:110px;width:117px;height:17px;overflow:hidden;"><span style="left:3px;top:3px;transform:translateX(-0.40px) scaleX(0.9981);">9/18/2022 4:09:28 PM</span></div><div class="tc " style="left:601px;top:110px;width:124px;height:17px;overflow:hidden;"><span style="left:3px;top:3px;transform:translateX(0.01px) scaleX(0.9897);">10/5/2022 9:20:04 PM</span></div><div class="rowbg" style="top:128px;background:#fffee6"></div><div class="fix" style="top:128px"><span>40</span></div><div class="tc b" style="left:29px;top:128px;width:191px;height:17px;overflow:hidden;"><span style="left:3px;top:3px;transform:translateX(0.20px) scaleX(1.0624);">CZ_Accounting_Test</span></div><div class="tc " style="left:221px;top:128px;width:51px;height:17px;overflow:hidden;"><span style="left:3px;top:3px;transform:translateX(-1.04px) scaleX(0.9385);">FD</span></div><div class="tc " style="left:273px;top:128px;width:87px;height:17px;overflow:hidden;"><span style="left:3px;top:3px;transform:translateX(-0.10px) scaleX(0.9406);">Oracle</span></div><div class="tc " style="left:361px;top:128px;width:60px;height:17px;overflow:hidden;"><span style="left:3px;top:3px;transform:translateX(-1.38px) scaleX(1.0765);">mdf</span></div><svg class="abs" style="left:422px;top:128px" width="60" height="17"><rect x="3" y="4" width="57" height="5" fill="url(#ast)"/></svg><div class="tc " style="left:483px;top:128px;width:117px;height:17px;overflow:hidden;"><span style="left:3px;top:3px;transform:translateX(-0.40px) scaleX(0.9981);">9/18/2022 4:09:28 PM</span></div><div class="rowbg" style="top:146px;background:#ffffff"></div><div class="fix" style="top:146px"><span>46</span></div><div class="tc b" style="left:29px;top:146px;width:191px;height:17px;overflow:hidden;"><span style="left:3px;top:3px;transform:translateX(0.20px) scaleX(1.0117);">CZ_DWH</span></div><div class="tc " style="left:221px;top:146px;width:51px;height:17px;overflow:hidden;"><span style="left:3px;top:3px;transform:translateX(-1.04px) scaleX(0.9385);">FD</span></div><div class="tc " style="left:273px;top:146px;width:87px;height:17px;overflow:hidden;"><span style="left:3px;top:3px;transform:translateX(-1.04px) scaleX(0.9390);">PostgreSQL</span></div><div class="tc " style="left:361px;top:146px;width:60px;height:17px;overflow:hidden;"><span style="left:3px;top:3px;transform:translateX(-0.30px) scaleX(0.9833);">vitalii</span></div><svg class="abs" style="left:422px;top:146px" width="60" height="17"><rect x="3" y="4" width="57" height="5" fill="url(#ast)"/></svg><div class="tc " style="left:483px;top:146px;width:117px;height:17px;overflow:hidden;"><span style="left:3px;top:3px;transform:translateX(-0.40px) scaleX(0.9981);">9/18/2022 4:09:28 PM</span></div><div class="tc " style="left:601px;top:146px;width:124px;height:17px;overflow:hidden;"><span style="left:3px;top:3px;transform:translateX(0.01px) scaleX(0.9897);">10/5/2022 9:20:43 PM</span></div><div class="rowbg" style="top:164px;background:#fffee6"></div><div class="fix" style="top:164px"><span>18</span></div><div class="tc b" style="left:29px;top:164px;width:191px;height:17px;overflow:hidden;"><span style="left:3px;top:3px;transform:translateX(0.20px) scaleX(1.0345);">CZ_DWH_Dev</span></div><div class="tc " style="left:221px;top:164px;width:51px;height:17px;overflow:hidden;"><span style="left:3px;top:3px;transform:translateX(-1.04px) scaleX(0.9385);">FD</span></div><div class="tc " style="left:273px;top:164px;width:87px;height:17px;overflow:hidden;"><span style="left:3px;top:3px;transform:translateX(-1.04px) scaleX(0.9390);">PostgreSQL</span></div><div class="tc " style="left:361px;top:164px;width:60px;height:17px;overflow:hidden;"><span style="left:3px;top:3px;transform:translateX(-0.30px) scaleX(0.9833);">vitalii</span></div><div class="tc " style="left:483px;top:164px;width:117px;height:17px;overflow:hidden;"><span style="left:3px;top:3px;transform:translateX(-0.40px) scaleX(0.9981);">9/18/2022 4:09:28 PM</span></div><div class="rowbg" style="top:182px;background:#ffffff"></div><div class="fix" style="top:182px"><span>34</span></div><div class="tc b" style="left:29px;top:182px;width:191px;height:17px;overflow:hidden;"><span style="left:3px;top:3px;transform:translateX(0.20px) scaleX(1.0673);">CZ_DWH_Test</span></div><div class="tc " style="left:221px;top:182px;width:51px;height:17px;overflow:hidden;"><span style="left:3px;top:3px;transform:translateX(-1.04px) scaleX(0.9385);">FD</span></div><div class="tc " style="left:273px;top:182px;width:87px;height:17px;overflow:hidden;"><span style="left:3px;top:3px;transform:translateX(-1.04px) scaleX(0.9390);">PostgreSQL</span></div><div class="tc " style="left:361px;top:182px;width:60px;height:17px;overflow:hidden;"><span style="left:3px;top:3px;transform:translateX(-0.30px) scaleX(0.9833);">vitalii</span></div><svg class="abs" style="left:422px;top:182px" width="60" height="17"><rect x="3" y="4" width="57" height="5" fill="url(#ast)"/></svg><div class="tc " style="left:483px;top:182px;width:117px;height:17px;overflow:hidden;"><span style="left:3px;top:3px;transform:translateX(-0.40px) scaleX(0.9981);">9/18/2022 4:09:28 PM</span></div><div class="rowbg" style="top:200px;background:#fffee6"></div><div class="fix sel" style="top:200px"><span>43</span></div><div class="selcell" style="top:200px"></div><div class="tc b selt" style="left:29px;top:200px;width:191px;height:17px;overflow:hidden;"><span style="left:3px;top:3px;transform:translateX(0.20px) scaleX(1.0370);">Db Examples</span></div><div class="tc " style="left:221px;top:200px;width:51px;height:17px;overflow:hidden;"><span style="left:3px;top:3px;transform:translateX(-0.10px) scaleX(0.8875);">ADO</span></div><div class="tc " style="left:273px;top:200px;width:87px;height:17px;overflow:hidden;"><span style="left:3px;top:3px;transform:translateX(-0.10px) scaleX(0.9032);">dBase</span></div><div class="tc " style="left:483px;top:200px;width:117px;height:17px;overflow:hidden;"><span style="left:3px;top:3px;transform:translateX(-0.40px) scaleX(0.9981);">9/18/2022 4:09:28 PM</span></div><div class="tc " style="left:601px;top:200px;width:124px;height:17px;overflow:hidden;"><span style="left:3px;top:3px;transform:translateX(-0.01px) scaleX(1.0116);">10/5/2022 10:29:13 AM</span></div><div class="rowbg" style="top:218px;background:#ffffff"></div><div class="fix" style="top:218px"><span>32</span></div><div class="tc b" style="left:29px;top:218px;width:191px;height:17px;overflow:hidden;"><span style="left:3px;top:3px;transform:translateX(0.20px) scaleX(1.0549);">DbDemos</span></div><div class="tc " style="left:221px;top:218px;width:51px;height:17px;overflow:hidden;"><span style="left:3px;top:3px;transform:translateX(-0.99px) scaleX(0.8857);">BDE</span></div><div class="tc " style="left:273px;top:218px;width:87px;height:17px;overflow:hidden;"><span style="left:3px;top:3px;transform:translateX(-1.01px) scaleX(0.9103);">STANDARD</span></div><div class="tc " style="left:483px;top:218px;width:117px;height:17px;overflow:hidden;"><span style="left:3px;top:3px;transform:translateX(-0.40px) scaleX(0.9981);">9/18/2022 4:09:28 PM</span></div><div class="rowbg" style="top:236px;background:#fffee6"></div><div class="fix" style="top:236px"><span>47</span></div><div class="tc b" style="left:29px;top:236px;width:191px;height:17px;overflow:hidden;"><span style="left:3px;top:3px;transform:translateX(0.20px) scaleX(1.0701);">It Learning Access</span></div><div class="tc " style="left:221px;top:236px;width:51px;height:17px;overflow:hidden;"><span style="left:3px;top:3px;transform:translateX(-0.10px) scaleX(0.8875);">ADO</span></div><div class="tc " style="left:273px;top:236px;width:87px;height:17px;overflow:hidden;"><span style="left:3px;top:3px;transform:translateX(-1.08px) scaleX(0.9802);">Microsoft Access</span></div><div class="tc " style="left:483px;top:236px;width:117px;height:17px;overflow:hidden;"><span style="left:3px;top:3px;transform:translateX(-0.40px) scaleX(0.9981);">9/18/2022 4:09:28 PM</span></div><div class="tc " style="left:601px;top:236px;width:124px;height:17px;overflow:hidden;"><span style="left:3px;top:3px;transform:translateX(0.01px) scaleX(0.9935);">10/5/2022 9:21:01 PM</span></div><div class="rowbg" style="top:254px;background:#ffffff"></div><div class="fix" style="top:254px"><span>13</span></div><div class="tc b" style="left:29px;top:254px;width:191px;height:17px;overflow:hidden;"><span style="left:3px;top:3px;transform:translateX(0.20px) scaleX(1.0398);">MX_Accounting</span></div><div class="tc " style="left:221px;top:254px;width:51px;height:17px;overflow:hidden;"><span style="left:3px;top:3px;transform:translateX(-1.04px) scaleX(0.9385);">FD</span></div><div class="tc " style="left:273px;top:254px;width:87px;height:17px;overflow:hidden;"><span style="left:3px;top:3px;transform:translateX(-0.10px) scaleX(0.9406);">Oracle</span></div><div class="tc " style="left:361px;top:254px;width:60px;height:17px;overflow:hidden;"><span style="left:3px;top:3px;transform:translateX(-1.38px) scaleX(1.0765);">mdf</span></div><div class="tc " style="left:483px;top:254px;width:117px;height:17px;overflow:hidden;"><span style="left:3px;top:3px;transform:translateX(-0.40px) scaleX(0.9981);">9/18/2022 4:09:28 PM</span></div><div class="rowbg" style="top:272px;background:#fffee6"></div><div class="fix" style="top:272px"><span>20</span></div><div class="tc b" style="left:29px;top:272px;width:191px;height:17px;overflow:hidden;"><span style="left:3px;top:3px;transform:translateX(0.20px) scaleX(1.0703);">MX_Accounting_Test</span></div><div class="tc " style="left:221px;top:272px;width:51px;height:17px;overflow:hidden;"><span style="left:3px;top:3px;transform:translateX(-1.04px) scaleX(0.9385);">FD</span></div><div class="tc " style="left:273px;top:272px;width:87px;height:17px;overflow:hidden;"><span style="left:3px;top:3px;transform:translateX(-0.10px) scaleX(0.9406);">Oracle</span></div><div class="tc " style="left:361px;top:272px;width:60px;height:17px;overflow:hidden;"><span style="left:3px;top:3px;transform:translateX(-1.38px) scaleX(1.0765);">mdf</span></div><div class="tc " style="left:483px;top:272px;width:117px;height:17px;overflow:hidden;"><span style="left:3px;top:3px;transform:translateX(-0.40px) scaleX(0.9981);">9/18/2022 4:09:28 PM</span></div><div class="rowbg" style="top:290px;background:#ffffff"></div><div class="fix" style="top:290px"><span>26</span></div><div class="tc b" style="left:29px;top:290px;width:191px;height:17px;overflow:hidden;"><span style="left:3px;top:3px;transform:translateX(0.20px) scaleX(1.0265);">MX_DWH</span></div><div class="tc " style="left:221px;top:290px;width:51px;height:17px;overflow:hidden;"><span style="left:3px;top:3px;transform:translateX(-1.04px) scaleX(0.9385);">FD</span></div><div class="tc " style="left:273px;top:290px;width:87px;height:17px;overflow:hidden;"><span style="left:3px;top:3px;transform:translateX(-1.04px) scaleX(0.9390);">PostgreSQL</span></div><div class="tc " style="left:361px;top:290px;width:60px;height:17px;overflow:hidden;"><span style="left:3px;top:3px;transform:translateX(-0.30px) scaleX(0.9833);">vitalii</span></div><div class="tc " style="left:483px;top:290px;width:117px;height:17px;overflow:hidden;"><span style="left:3px;top:3px;transform:translateX(-0.40px) scaleX(0.9981);">9/18/2022 4:09:28 PM</span></div><div class="rowbg" style="top:308px;background:#fffee6"></div><div class="fix" style="top:308px"><span>27</span></div><div class="tc b" style="left:29px;top:308px;width:191px;height:17px;overflow:hidden;"><span style="left:3px;top:3px;transform:translateX(0.20px) scaleX(1.0967);">MX_DWH (database = postgres)</span></div><div class="tc " style="left:221px;top:308px;width:51px;height:17px;overflow:hidden;"><span style="left:3px;top:3px;transform:translateX(-1.04px) scaleX(0.9385);">FD</span></div><div class="tc " style="left:273px;top:308px;width:87px;height:17px;overflow:hidden;"><span style="left:3px;top:3px;transform:translateX(-1.04px) scaleX(0.9390);">PostgreSQL</span></div><div class="tc " style="left:361px;top:308px;width:60px;height:17px;overflow:hidden;"><span style="left:3px;top:3px;transform:translateX(-0.30px) scaleX(0.9833);">vitalii</span></div><div class="tc " style="left:483px;top:308px;width:117px;height:17px;overflow:hidden;"><span style="left:3px;top:3px;transform:translateX(-0.40px) scaleX(0.9981);">9/18/2022 4:09:28 PM</span></div><div class="rowbg" style="top:326px;background:#ffffff"></div><div class="fix" style="top:326px"><span>22</span></div><div class="tc b" style="left:29px;top:326px;width:191px;height:17px;overflow:hidden;"><span style="left:3px;top:3px;transform:translateX(0.20px) scaleX(1.0287);">MX_DWH_RISKS</span></div><div class="tc " style="left:221px;top:326px;width:51px;height:17px;overflow:hidden;"><span style="left:3px;top:3px;transform:translateX(-1.04px) scaleX(0.9385);">FD</span></div><div class="tc " style="left:273px;top:326px;width:87px;height:17px;overflow:hidden;"><span style="left:3px;top:3px;transform:translateX(-1.04px) scaleX(0.9390);">PostgreSQL</span></div><div class="tc " style="left:361px;top:326px;width:60px;height:17px;overflow:hidden;"><span style="left:3px;top:3px;transform:translateX(-1.26px) scaleX(0.9595);">risksadm</span></div><div class="tc " style="left:483px;top:326px;width:117px;height:17px;overflow:hidden;"><span style="left:3px;top:3px;transform:translateX(-0.40px) scaleX(0.9981);">9/18/2022 4:09:28 PM</span></div><div class="rowbg" style="top:344px;background:#fffee6"></div><div class="fix" style="top:344px"><span>16</span></div><div class="tc b" style="left:29px;top:344px;width:191px;height:17px;overflow:hidden;"><span style="left:3px;top:3px;transform:translateX(0.20px) scaleX(1.0581);">MX_DWH_RISKS_Test</span></div><div class="tc " style="left:221px;top:344px;width:51px;height:17px;overflow:hidden;"><span style="left:3px;top:3px;transform:translateX(-1.04px) scaleX(0.9385);">FD</span></div><div class="tc " style="left:273px;top:344px;width:87px;height:17px;overflow:hidden;"><span style="left:3px;top:3px;transform:translateX(-1.04px) scaleX(0.9390);">PostgreSQL</span></div><div class="tc " style="left:361px;top:344px;width:60px;height:17px;overflow:hidden;"><span style="left:3px;top:3px;transform:translateX(-1.26px) scaleX(0.9595);">risksadm</span></div><div class="tc " style="left:483px;top:344px;width:117px;height:17px;overflow:hidden;"><span style="left:3px;top:3px;transform:translateX(-0.40px) scaleX(0.9981);">9/18/2022 4:09:28 PM</span></div><div class="rowbg" style="top:362px;background:#ffffff"></div><div class="fix" style="top:362px"><span>14</span></div><div class="tc b" style="left:29px;top:362px;width:191px;height:17px;overflow:hidden;"><span style="left:3px;top:3px;transform:translateX(0.20px) scaleX(1.0792);">MX_DWH_RISKS_Test (database = postgres)</span></div><div class="tc " style="left:221px;top:362px;width:51px;height:17px;overflow:hidden;"><span style="left:3px;top:3px;transform:translateX(-1.04px) scaleX(0.9385);">FD</span></div><div class="tc " style="left:273px;top:362px;width:87px;height:17px;overflow:hidden;"><span style="left:3px;top:3px;transform:translateX(-1.04px) scaleX(0.9390);">PostgreSQL</span></div><div class="tc " style="left:361px;top:362px;width:60px;height:17px;overflow:hidden;"><span style="left:3px;top:3px;transform:translateX(-1.26px) scaleX(0.9595);">risksadm</span></div><div class="tc " style="left:483px;top:362px;width:117px;height:17px;overflow:hidden;"><span style="left:3px;top:3px;transform:translateX(-0.40px) scaleX(0.9981);">9/18/2022 4:09:28 PM</span></div><div class="rowbg" style="top:380px;background:#fffee6"></div><div class="fix" style="top:380px"><span>21</span></div><div class="tc b" style="left:29px;top:380px;width:191px;height:17px;overflow:hidden;"><span style="left:3px;top:3px;transform:translateX(0.20px) scaleX(1.0721);">MX_DWH_Test</span></div><div class="tc " style="left:221px;top:380px;width:51px;height:17px;overflow:hidden;"><span style="left:3px;top:3px;transform:translateX(-1.04px) scaleX(0.9385);">FD</span></div><div class="tc " style="left:273px;top:380px;width:87px;height:17px;overflow:hidden;"><span style="left:3px;top:3px;transform:translateX(-1.04px) scaleX(0.9390);">PostgreSQL</span></div><div class="tc " style="left:361px;top:380px;width:60px;height:17px;overflow:hidden;"><span style="left:3px;top:3px;transform:translateX(-0.30px) scaleX(1.0429);">vitali</span></div><div class="tc " style="left:483px;top:380px;width:117px;height:17px;overflow:hidden;"><span style="left:3px;top:3px;transform:translateX(-0.40px) scaleX(0.9981);">9/18/2022 4:09:28 PM</span></div><div class="rowbg" style="top:398px;background:#ffffff"></div><div class="fix" style="top:398px"><span>17</span></div><div class="tc b" style="left:29px;top:398px;width:191px;height:17px;overflow:hidden;"><span style="left:3px;top:3px;transform:translateX(0.20px) scaleX(1.0967);">MX_DWH_Test (database = postgres)</span></div><div class="tc " style="left:221px;top:398px;width:51px;height:17px;overflow:hidden;"><span style="left:3px;top:3px;transform:translateX(-1.04px) scaleX(0.9385);">FD</span></div><div class="tc " style="left:273px;top:398px;width:87px;height:17px;overflow:hidden;"><span style="left:3px;top:3px;transform:translateX(-1.04px) scaleX(0.9390);">PostgreSQL</span></div><div class="tc " style="left:361px;top:398px;width:60px;height:17px;overflow:hidden;"><span style="left:3px;top:3px;transform:translateX(-0.30px) scaleX(1.0429);">vitali</span></div><div class="tc " style="left:483px;top:398px;width:117px;height:17px;overflow:hidden;"><span style="left:3px;top:3px;transform:translateX(-0.40px) scaleX(0.9981);">9/18/2022 4:09:28 PM</span></div><div class="rowbg" style="top:416px;background:#fffee6"></div><div class="fix" style="top:416px"><span>23</span></div><div class="tc b" style="left:29px;top:416px;width:191px;height:17px;overflow:hidden;"><span style="left:3px;top:3px;transform:translateX(0.20px) scaleX(1.0228);">MX_FRONT_Repl</span></div><div class="tc " style="left:221px;top:416px;width:51px;height:17px;overflow:hidden;"><span style="left:3px;top:3px;transform:translateX(-1.04px) scaleX(0.9385);">FD</span></div><div class="tc " style="left:273px;top:416px;width:87px;height:17px;overflow:hidden;"><span style="left:3px;top:3px;transform:translateX(-1.04px) scaleX(0.9390);">PostgreSQL</span></div><div class="tc " style="left:361px;top:416px;width:60px;height:17px;overflow:hidden;"><span style="left:3px;top:3px;transform:translateX(-0.30px) scaleX(0.9977);">dwh_repl</span></div><div class="tc " style="left:483px;top:416px;width:117px;height:17px;overflow:hidden;"><span style="left:3px;top:3px;transform:translateX(-0.40px) scaleX(0.9981);">9/18/2022 4:09:28 PM</span></div><div class="rowbg" style="top:434px;background:#ffffff"></div><div class="fix" style="top:434px"><span>25</span></div><div class="tc b" style="left:29px;top:434px;width:191px;height:17px;overflow:hidden;"><span style="left:3px;top:3px;transform:translateX(0.20px) scaleX(1.0222);">MX_FRONT_ReplAdm</span></div><div class="tc " style="left:221px;top:434px;width:51px;height:17px;overflow:hidden;"><span style="left:3px;top:3px;transform:translateX(-1.04px) scaleX(0.9385);">FD</span></div><div class="tc " style="left:273px;top:434px;width:87px;height:17px;overflow:hidden;"><span style="left:3px;top:3px;transform:translateX(-1.04px) scaleX(0.9390);">PostgreSQL</span></div><div class="tc " style="left:361px;top:434px;width:60px;height:17px;overflow:hidden;"><span style="left:3px;top:3px;transform:translateX(-0.30px) scaleX(0.9977);">dwh_repl_adm</span></div><div class="tc " style="left:483px;top:434px;width:117px;height:17px;overflow:hidden;"><span style="left:3px;top:3px;transform:translateX(-0.40px) scaleX(0.9981);">9/18/2022 4:09:28 PM</span></div><div class="rowbg" style="top:452px;background:#fffee6"></div><div class="fix" style="top:452px"><span>11</span></div><div class="tc b" style="left:29px;top:452px;width:191px;height:17px;overflow:hidden;"><span style="left:3px;top:3px;transform:translateX(0.20px) scaleX(1.0287);">MX_FRONT_Test</span></div><div class="tc " style="left:221px;top:452px;width:51px;height:17px;overflow:hidden;"><span style="left:3px;top:3px;transform:translateX(-1.04px) scaleX(0.9385);">FD</span></div><div class="tc " style="left:273px;top:452px;width:87px;height:17px;overflow:hidden;"><span style="left:3px;top:3px;transform:translateX(-1.04px) scaleX(0.9390);">PostgreSQL</span></div><div class="tc " style="left:361px;top:452px;width:60px;height:17px;overflow:hidden;"><span style="left:3px;top:3px;transform:translateX(-0.30px) scaleX(0.9650);">dwh</span></div><div class="tc " style="left:483px;top:452px;width:117px;height:17px;overflow:hidden;"><span style="left:3px;top:3px;transform:translateX(-0.40px) scaleX(0.9981);">9/18/2022 4:09:28 PM</span></div><div class="rowbg" style="top:470px;background:#ffffff"></div><div class="fix" style="top:470px"><span>12</span></div><div class="tc b" style="left:29px;top:470px;width:191px;height:17px;overflow:hidden;"><span style="left:3px;top:3px;transform:translateX(0.20px) scaleX(1.0492);">MX_FRONT_Test_Repl</span></div><div class="tc " style="left:221px;top:470px;width:51px;height:17px;overflow:hidden;"><span style="left:3px;top:3px;transform:translateX(-1.04px) scaleX(0.9385);">FD</span></div><div class="tc " style="left:273px;top:470px;width:87px;height:17px;overflow:hidden;"><span style="left:3px;top:3px;transform:translateX(-1.04px) scaleX(0.9390);">PostgreSQL</span></div><div class="tc " style="left:361px;top:470px;width:60px;height:17px;overflow:hidden;"><span style="left:3px;top:3px;transform:translateX(-0.30px) scaleX(0.9977);">dwh_repl</span></div><div class="tc " style="left:483px;top:470px;width:117px;height:17px;overflow:hidden;"><span style="left:3px;top:3px;transform:translateX(-0.40px) scaleX(0.9981);">9/18/2022 4:09:28 PM</span></div><div class="rowbg" style="top:488px;background:#fffee6"></div><div class="fix" style="top:488px"><span>24</span></div><div class="tc b" style="left:29px;top:488px;width:191px;height:17px;overflow:hidden;"><span style="left:3px;top:3px;transform:translateX(0.20px) scaleX(1.0458);">MX_FRONT_Test_ReplAdm</span></div><div class="tc " style="left:221px;top:488px;width:51px;height:17px;overflow:hidden;"><span style="left:3px;top:3px;transform:translateX(-1.04px) scaleX(0.9385);">FD</span></div><div class="tc " style="left:273px;top:488px;width:87px;height:17px;overflow:hidden;"><span style="left:3px;top:3px;transform:translateX(-1.04px) scaleX(0.9390);">PostgreSQL</span></div><div class="tc " style="left:361px;top:488px;width:60px;height:17px;overflow:hidden;"><span style="left:3px;top:3px;transform:translateX(-0.30px) scaleX(0.9977);">dwh_repl_adm</span></div><div class="tc " style="left:483px;top:488px;width:117px;height:17px;overflow:hidden;"><span style="left:3px;top:3px;transform:translateX(-0.40px) scaleX(0.9981);">9/18/2022 4:09:28 PM</span></div><div class="rowbg" style="top:506px;background:#ffffff"></div><div class="fix" style="top:506px"><span>31</span></div><div class="tc b" style="left:29px;top:506px;width:191px;height:17px;overflow:hidden;"><span style="left:3px;top:3px;transform:translateX(0.20px) scaleX(1.1208);">MyIBTest</span></div><div class="tc " style="left:221px;top:506px;width:51px;height:17px;overflow:hidden;"><span style="left:3px;top:3px;transform:translateX(-1.04px) scaleX(0.9385);">FD</span></div><div class="tc " style="left:273px;top:506px;width:87px;height:17px;overflow:hidden;"><span style="left:3px;top:3px;transform:translateX(-1.12px) scaleX(1.0222);">Interbase</span></div><div class="tc " style="left:361px;top:506px;width:60px;height:17px;overflow:hidden;"><span style="left:3px;top:3px;transform:translateX(-1.15px) scaleX(0.8545);">SYSDBA</span></div><svg class="abs" style="left:422px;top:506px" width="60" height="17"><rect x="3" y="4" width="57" height="5" fill="url(#ast)"/></svg><div class="tc " style="left:483px;top:506px;width:117px;height:17px;overflow:hidden;"><span style="left:3px;top:3px;transform:translateX(-0.40px) scaleX(0.9981);">9/18/2022 4:09:28 PM</span></div><div class="rowbg" style="top:524px;background:#fffee6"></div><div class="fix" style="top:524px"><span>3</span></div><div class="tc b" style="left:29px;top:524px;width:191px;height:17px;overflow:hidden;"><span style="left:3px;top:3px;transform:translateX(0.20px) scaleX(1.0457);">Paydocs (Access)</span></div><div class="tc " style="left:221px;top:524px;width:51px;height:17px;overflow:hidden;"><span style="left:3px;top:3px;transform:translateX(-0.10px) scaleX(0.8875);">ADO</span></div><div class="tc " style="left:273px;top:524px;width:87px;height:17px;overflow:hidden;"><span style="left:3px;top:3px;transform:translateX(-1.08px) scaleX(0.9802);">Microsoft Access</span></div><div class="tc " style="left:483px;top:524px;width:117px;height:17px;overflow:hidden;"><span style="left:3px;top:3px;transform:translateX(-0.40px) scaleX(0.9981);">9/18/2022 4:09:28 PM</span></div><div class="rowbg" style="top:542px;background:#ffffff"></div><div class="fix" style="top:542px"><span>36</span></div><div class="tc b" style="left:29px;top:542px;width:191px;height:17px;overflow:hidden;"><span style="left:3px;top:3px;transform:translateX(0.20px) scaleX(0.9878);">RO_B2</span></div><div class="tc " style="left:221px;top:542px;width:51px;height:17px;overflow:hidden;"><span style="left:3px;top:3px;transform:translateX(-1.04px) scaleX(0.9385);">FD</span></div><div class="tc " style="left:273px;top:542px;width:87px;height:17px;overflow:hidden;"><span style="left:3px;top:3px;transform:translateX(-0.10px) scaleX(0.9406);">Oracle</span></div><div class="tc " style="left:361px;top:542px;width:60px;height:17px;overflow:hidden;"><span style="left:3px;top:3px;transform:translateX(-1.38px) scaleX(1.0765);">mdf</span></div><svg class="abs" style="left:422px;top:542px" width="60" height="17"><rect x="3" y="4" width="57" height="5" fill="url(#ast)"/></svg><div class="tc " style="left:483px;top:542px;width:117px;height:17px;overflow:hidden;"><span style="left:3px;top:3px;transform:translateX(-0.40px) scaleX(0.9981);">9/18/2022 4:09:28 PM</span></div><div class="rowbg" style="top:560px;background:#fffee6"></div><div class="fix" style="top:560px"><span>35</span></div><div class="tc b" style="left:29px;top:560px;width:191px;height:17px;overflow:hidden;"><span style="left:3px;top:3px;transform:translateX(0.20px) scaleX(1.0667);">RO_B2 (cr)</span></div><div class="tc " style="left:221px;top:560px;width:51px;height:17px;overflow:hidden;"><span style="left:3px;top:3px;transform:translateX(-1.04px) scaleX(0.9385);">FD</span></div><div class="tc " style="left:273px;top:560px;width:87px;height:17px;overflow:hidden;"><span style="left:3px;top:3px;transform:translateX(-0.10px) scaleX(0.9406);">Oracle</span></div><div class="tc " style="left:361px;top:560px;width:60px;height:17px;overflow:hidden;"><span style="left:3px;top:3px;transform:translateX(-0.30px) scaleX(1.0125);">crtr</span></div><svg class="abs" style="left:422px;top:560px" width="60" height="17"><rect x="3" y="4" width="57" height="5" fill="url(#ast)"/></svg><div class="tc " style="left:483px;top:560px;width:117px;height:17px;overflow:hidden;"><span style="left:3px;top:3px;transform:translateX(-0.40px) scaleX(0.9981);">9/18/2022 4:09:28 PM</span></div><div id="hline"></div><div class="fix" style="top:578px;height:3px;border-bottom:none"></div><div class="vsep" style="left:220px"></div><div class="vsep" style="left:272px"></div><div class="vsep" style="left:360px"></div><div class="vsep" style="left:421px"></div><div class="vsep" style="left:482px"></div><div class="vsep" style="left:600px"></div><div class="vsep" style="left:725px"></div><div class="hsep" style="top:127px"></div><div class="hsep" style="top:145px"></div><div class="hsep" style="top:163px"></div><div class="hsep" style="top:181px"></div><div class="hsep" style="top:199px"></div><div class="hsep" style="top:217px"></div><div class="hsep" style="top:235px"></div><div class="hsep" style="top:253px"></div><div class="hsep" style="top:271px"></div><div class="hsep" style="top:289px"></div><div class="hsep" style="top:307px"></div><div class="hsep" style="top:325px"></div><div class="hsep" style="top:343px"></div><div class="hsep" style="top:361px"></div><div class="hsep" style="top:379px"></div><div class="hsep" style="top:397px"></div><div class="hsep" style="top:415px"></div><div class="hsep" style="top:433px"></div><div class="hsep" style="top:451px"></div><div class="hsep" style="top:469px"></div><div class="hsep" style="top:487px"></div><div class="hsep" style="top:505px"></div><div class="hsep" style="top:523px"></div><div class="hsep" style="top:541px"></div><div class="hsep" style="top:559px"></div><div class="hsep" style="top:577px"></div></div><div id="wt"></div><div id="wl"></div><div id="wl2"></div><div id="wl3"></div><div id="wr"></div><div id="wr2"></div><div id="wb"></div><div id="vsb"></div><div id="vthumb"></div><div id="hsb"></div><div id="hthumb"></div><div id="corner"></div>
<svg class="abs" style="left:0;top:0" width="800" height="600">
 <rect x="789" y="98" width="1" height="1" fill="#606060"/><rect x="788" y="99" width="3" height="1" fill="#606060"/><rect x="787" y="100" width="5" height="1" fill="#606060"/><rect x="786" y="101" width="3" height="1" fill="#606060"/><rect x="790" y="101" width="3" height="1" fill="#606060"/><rect x="786" y="102" width="2" height="1" fill="#606060"/><rect x="791" y="102" width="2" height="1" fill="#606060"/><rect x="786" y="103" width="1" height="1" fill="#606060"/><rect x="792" y="103" width="1" height="1" fill="#606060"/><rect x="786" y="570" width="1" height="1" fill="#606060"/><rect x="792" y="570" width="1" height="1" fill="#606060"/><rect x="786" y="571" width="2" height="1" fill="#606060"/><rect x="791" y="571" width="2" height="1" fill="#606060"/><rect x="786" y="572" width="3" height="1" fill="#606060"/><rect x="790" y="572" width="3" height="1" fill="#606060"/><rect x="787" y="573" width="5" height="1" fill="#606060"/><rect x="788" y="574" width="3" height="1" fill="#606060"/><rect x="789" y="575" width="1" height="1" fill="#606060"/><rect x="770" y="586" width="3" height="1" fill="#606060"/><rect x="771" y="587" width="3" height="1" fill="#606060"/><rect x="772" y="588" width="3" height="1" fill="#606060"/><rect x="773" y="589" width="3" height="1" fill="#606060"/><rect x="772" y="590" width="3" height="1" fill="#606060"/><rect x="771" y="591" width="3" height="1" fill="#606060"/><rect x="770" y="592" width="3" height="1" fill="#606060"/><rect x="10" y="586" width="3" height="1" fill="#606060"/><rect x="9" y="587" width="3" height="1" fill="#606060"/><rect x="8" y="588" width="3" height="1" fill="#606060"/><rect x="7" y="589" width="3" height="1" fill="#606060"/><rect x="8" y="590" width="3" height="1" fill="#606060"/><rect x="9" y="591" width="3" height="1" fill="#606060"/><rect x="10" y="592" width="3" height="1" fill="#606060"/>
 <g fill="#b4b4b4"><rect x="793" y="588" width="2" height="2"/><rect x="790" y="591" width="2" height="2"/><rect x="793" y="591" width="2" height="2"/><rect x="787" y="594" width="2" height="2"/><rect x="790" y="594" width="2" height="2"/><rect x="793" y="594" width="2" height="2"/></g>
</svg>
</body></html>
